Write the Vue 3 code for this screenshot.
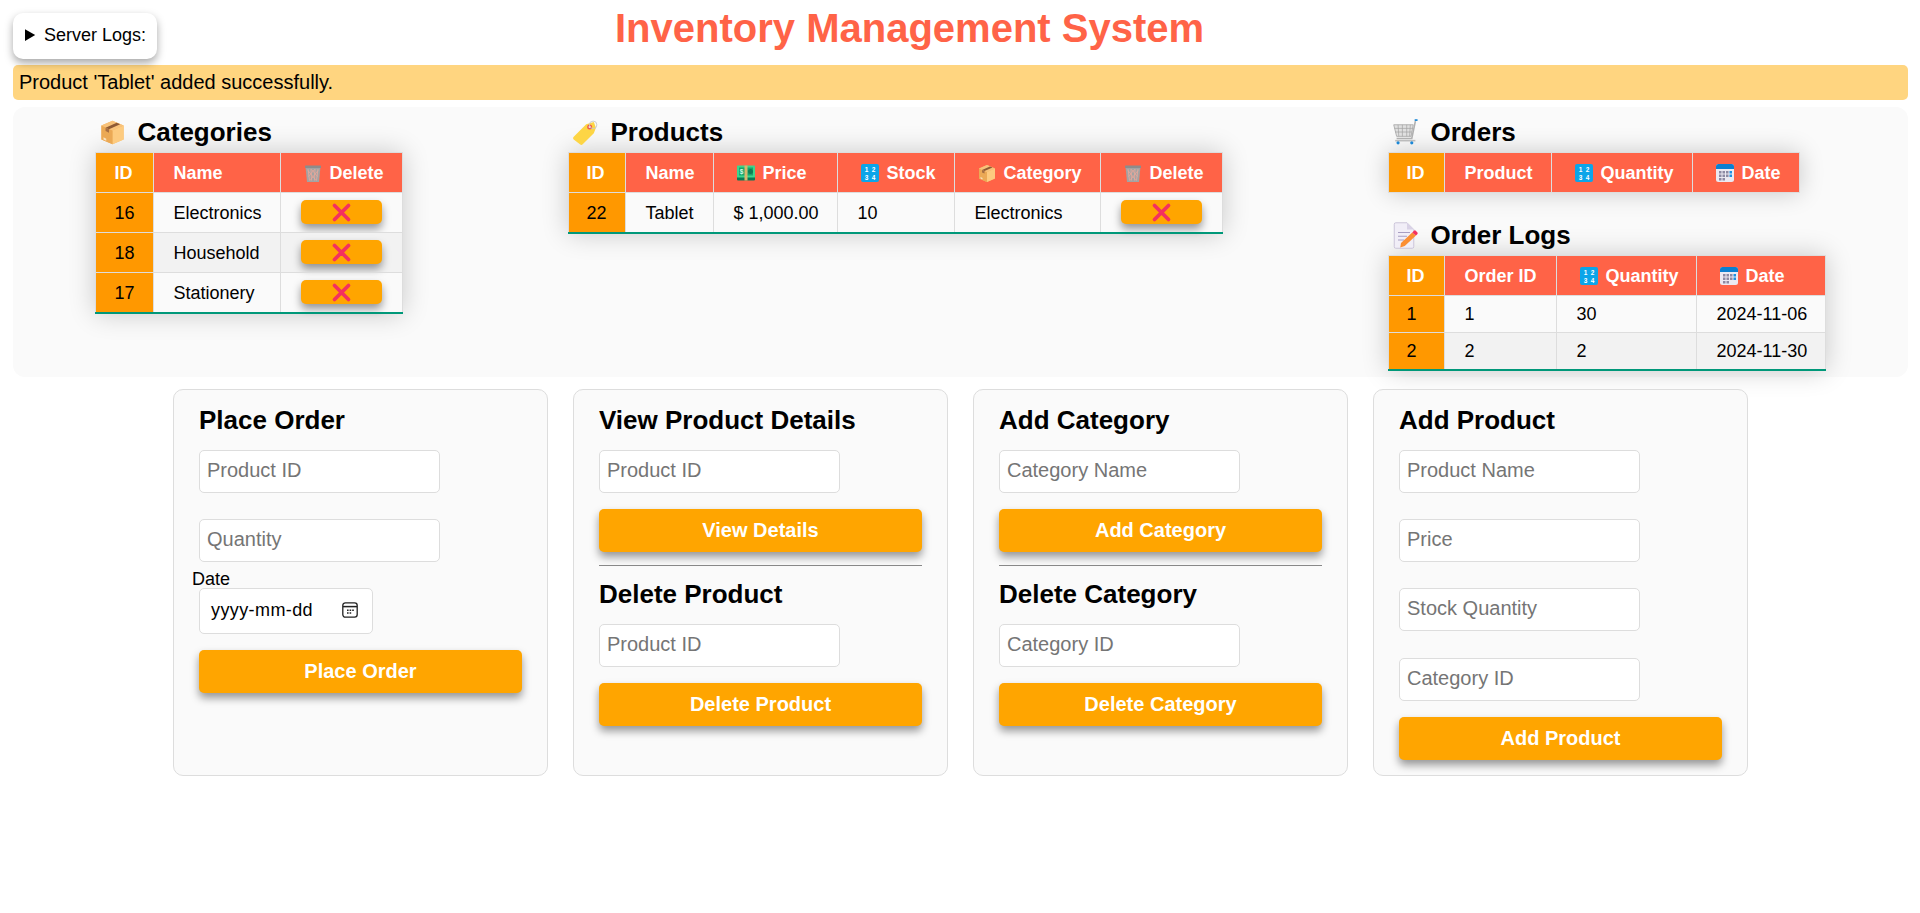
<template>
  <div class="page">
    <div class="top">
      <details class="logs">
        <summary>Server Logs:</summary>
      </details>
      <h1>Inventory Management System</h1>
    </div>
    <div class="message">Product 'Tablet' added successfully.</div>

    <div class="panel">
      <section class="first">
        <h2><span class="h-icon"><svg viewBox="0 0 36 36" width="25" height="27"><use href="#i-box" /></svg></span>Categories</h2>
        <table class="t-cat">
          <thead>
            <tr>
              <th>ID</th>
              <th>Name</th>
              <th><span class="th-icon"><svg viewBox="0 0 36 36" width="18" height="19"><use href="#i-trash" /></svg></span>Delete</th>
            </tr>
          </thead>
          <tbody>
            <tr v-for="c in categories" :key="c.id">
              <td>{{ c.id }}</td>
              <td>{{ c.name }}</td>
              <td class="btn-cell"><button class="del"><svg viewBox="0 0 36 36" width="21" height="21"><use href="#i-x" /></svg></button></td>
            </tr>
          </tbody>
        </table>
      </section>

      <section>
        <h2><span class="h-icon"><svg viewBox="0 0 36 36" width="25" height="25"><use href="#i-tag" /></svg></span>Products</h2>
        <table class="t-prod">
          <thead>
            <tr>
              <th>ID</th>
              <th>Name</th>
              <th><span class="th-icon"><svg viewBox="0 0 36 36" width="18" height="18"><use href="#i-money" /></svg></span>Price</th>
              <th><span class="th-icon"><svg viewBox="0 0 36 36" width="18" height="18"><use href="#i-nums" /></svg></span>Stock</th>
              <th><span class="th-icon"><svg viewBox="0 0 36 36" width="18" height="19"><use href="#i-box" /></svg></span>Category</th>
              <th><span class="th-icon"><svg viewBox="0 0 36 36" width="18" height="19"><use href="#i-trash" /></svg></span>Delete</th>
            </tr>
          </thead>
          <tbody>
            <tr>
              <td>22</td>
              <td>Tablet</td>
              <td>$ 1,000.00</td>
              <td>10</td>
              <td>Electronics</td>
              <td class="btn-cell"><button class="del"><svg viewBox="0 0 36 36" width="21" height="21"><use href="#i-x" /></svg></button></td>
            </tr>
          </tbody>
        </table>
      </section>

      <section>
        <h2><span class="h-icon"><svg viewBox="0 0 36 36" width="26" height="26"><use href="#i-cart" /></svg></span>Orders</h2>
        <table class="t-orders">
          <thead>
            <tr>
              <th>ID</th>
              <th>Product</th>
              <th><span class="th-icon"><svg viewBox="0 0 36 36" width="18" height="18"><use href="#i-nums" /></svg></span>Quantity</th>
              <th><span class="th-icon"><svg viewBox="0 0 36 36" width="18" height="18"><use href="#i-cal" /></svg></span>Date</th>
            </tr>
          </thead>
        </table>

        <h2 class="second"><span class="h-icon"><svg viewBox="0 0 36 36" width="27" height="27"><use href="#i-memo" /></svg></span>Order Logs</h2>
        <table class="t-logs">
          <thead>
            <tr>
              <th>ID</th>
              <th>Order ID</th>
              <th><span class="th-icon"><svg viewBox="0 0 36 36" width="18" height="18"><use href="#i-nums" /></svg></span>Quantity</th>
              <th><span class="th-icon"><svg viewBox="0 0 36 36" width="18" height="18"><use href="#i-cal" /></svg></span>Date</th>
            </tr>
          </thead>
          <tbody>
            <tr v-for="l in orderLogs" :key="l.id">
              <td>{{ l.id }}</td>
              <td>{{ l.orderId }}</td>
              <td>{{ l.qty }}</td>
              <td>{{ l.date }}</td>
            </tr>
          </tbody>
        </table>
      </section>
    </div>

    <div class="forms">
      <div class="card">
        <h3>Place Order</h3>
        <input class="field gap" placeholder="Product ID" />
        <input class="field near" placeholder="Quantity" />
        <label class="date-label">Date</label>
        <div class="date-field">
          <span>yyyy-mm-dd</span>
          <svg viewBox="0 0 16 16" width="16" height="16" fill="none" stroke="#222" stroke-width="1.3">
            <rect x="0.8" y="0.8" width="14.4" height="14.4" rx="2.6" />
            <path d="M1 4.6h14" stroke-width="1.5" />
            <path d="M5 8.2h1.6M7.6 8.2h1.6M10.2 8.2h1.6M5 11h1.6M7.6 11h1.6" stroke-width="1.5" />
          </svg>
        </div>
        <button class="submit">Place Order</button>
      </div>

      <div class="card">
        <h3>View Product Details</h3>
        <input class="field" placeholder="Product ID" />
        <button class="submit">View Details</button>
        <hr />
        <h3>Delete Product</h3>
        <input class="field" placeholder="Product ID" />
        <button class="submit">Delete Product</button>
      </div>

      <div class="card">
        <h3>Add Category</h3>
        <input class="field" placeholder="Category Name" />
        <button class="submit">Add Category</button>
        <hr />
        <h3>Delete Category</h3>
        <input class="field" placeholder="Category ID" />
        <button class="submit">Delete Category</button>
      </div>

      <div class="card">
        <h3>Add Product</h3>
        <input class="field gap" placeholder="Product Name" />
        <input class="field gap" placeholder="Price" />
        <input class="field gap wide-gap" placeholder="Stock Quantity" />
        <input class="field" placeholder="Category ID" />
        <button class="submit">Add Product</button>
      </div>
    </div>

    <!-- emoji drawn once, reused with <use> -->
    <svg class="defs" width="0" height="0" aria-hidden="true">
      <defs>
        <symbol id="i-box" viewBox="0 0 36 36" preserveAspectRatio="none">
          <path d="M18 1 34 8v20L18 35 2 28V8z" fill="#f4b869" />
          <path d="M18 15 34 8v20L18 35z" fill="#fdcb7f" />
          <path d="M2 8 18 15v20L2 28z" fill="#eba955" />
          <path d="M2 8 18 1l16 7-16 7z" fill="#f8c27a" />
          <path d="M8 11 24 4l5 2.2-16 7z" fill="#8f5a34" />
          <path d="M8 11v5l5 2.2v-5z" fill="#a86f42" />
          <path d="M5 25l4 2v3l-4-2z" fill="#f9e3c0" />
        </symbol>
        <symbol id="i-trash" viewBox="0 0 36 36" preserveAspectRatio="none">
          <path d="M3 4h30l-3 31H6z" fill="#a3a3a3" />
          <path d="M8 9 11 32M14 9l1 23M22 9l-1 23M28 9l-3 23M8 12 24 32M15 10 27 24M28 12 12 32M21 10 9 24" stroke="#eda899" stroke-width="1.5" fill="none" />
          <rect x="2" y="2" width="32" height="5" rx="1" fill="#8c8c8c" />
        </symbol>
        <symbol id="i-x" viewBox="0 0 36 36">
          <path d="M6 6 30 30M30 6 6 30" stroke="#f4305f" stroke-width="6.4" stroke-linecap="round" fill="none" />
        </symbol>
        <symbol id="i-money" viewBox="0 0 36 36">
          <rect x="0" y="8" width="36" height="25" rx="2" fill="#0a7a55" />
          <rect x="0" y="3" width="36" height="24" rx="1" fill="#3dd68c" />
          <rect x="4" y="7" width="28" height="16" fill="#17a56d" />
          <rect x="15" y="3" width="6" height="30" fill="#d9b66c" />
          <text x="5.5" y="20" font-size="13" font-family="Liberation Sans" fill="#d5f8e5">$</text>
          <circle cx="27" cy="15" r="5" fill="#0c7f55" />
        </symbol>
        <symbol id="i-nums" viewBox="0 0 36 36">
          <rect x="0" y="0" width="36" height="36" rx="4" fill="#0ba5e9" />
          <text x="11" y="15.5" font-size="13" font-weight="700" font-family="Liberation Sans" text-anchor="middle" fill="#fff">1</text>
          <text x="25" y="15.5" font-size="13" font-weight="700" font-family="Liberation Sans" text-anchor="middle" fill="#fff">2</text>
          <text x="11" y="31" font-size="13" font-weight="700" font-family="Liberation Sans" text-anchor="middle" fill="#fff">3</text>
          <text x="25" y="31" font-size="13" font-weight="700" font-family="Liberation Sans" text-anchor="middle" fill="#fff">4</text>
        </symbol>
        <symbol id="i-cal" viewBox="0 0 36 36">
          <rect x="0" y="0" width="36" height="36" rx="5" fill="#ebe9f2" />
          <path d="M0 10V5a5 5 0 0 1 5-5h26a5 5 0 0 1 5 5v5z" fill="#0b7fd0" />
          <g fill="#8d8aa3">
            <rect x="6" y="14" width="5" height="5" /><rect x="13" y="14" width="5" height="5" /><rect x="20" y="14" width="5" height="5" />
            <rect x="6" y="21" width="5" height="5" /><rect x="13" y="21" width="5" height="5" /><rect x="20" y="21" width="5" height="5" />
            <rect x="6" y="28" width="5" height="5" /><rect x="13" y="28" width="5" height="5" />
          </g>
          <rect x="27" y="14" width="5" height="5" fill="#1c8fe0" /><rect x="27" y="21" width="5" height="5" fill="#1c8fe0" />
        </symbol>
        <symbol id="i-tag" viewBox="0 0 36 36">
          <path d="M1 24 19 6l11-3 3 8-3 8-16 16a3 3 0 0 1-4 0L1 28a3 3 0 0 1 0-4z" fill="#fdd545" />
          <circle cx="24" cy="10" r="3.6" fill="#ef5a4c" />
          <circle cx="24" cy="10" r="1.6" fill="#fbe6e0" />
          <circle cx="29" cy="7" r="5.4" fill="none" stroke="#c9c9c9" stroke-width="1.3" />
        </symbol>
        <symbol id="i-cart" viewBox="0 0 36 36">
          <path d="M1 8h27l-3 16H5z" fill="#e0e0e0" stroke="#a8a8a8" stroke-width="1.2" />
          <path d="M7 8l1 16M13 8v16M19 8v16M24 8l-1 16M2 13h25M3 18h23" stroke="#a3a3a3" stroke-width="1" fill="none" />
          <path d="M31 3 26 27H5" fill="none" stroke="#b0b0b0" stroke-width="2.2" />
          <path d="M30 1.5h4" stroke="#1a87d6" stroke-width="2.4" />
          <path d="M3 30h28" stroke="#bcbcbc" stroke-width="2.2" />
          <circle cx="7" cy="33" r="2.2" fill="#1a87d6" /><circle cx="26" cy="33" r="2.2" fill="#1a87d6" />
        </symbol>
        <symbol id="i-memo" viewBox="0 0 36 36">
          <path d="M3 3a2 2 0 0 1 2-2h15l9 9v23a2 2 0 0 1-2 2H5a2 2 0 0 1-2-2z" fill="#f1eef7" stroke="#c7bfd6" stroke-width="1.2" />
          <path d="M20 1v9h9z" fill="#d9d2e6" />
          <path d="M8 14h16M8 19h12M8 24h8" stroke="#a89ec2" stroke-width="1.4" />
          <path d="M12 28 27 14l5 4-15 14-6 2z" fill="#fb8f33" />
          <path d="M27 14l2-2a2 2 0 0 1 3 0l2 2a2 2 0 0 1 0 2l-2 2z" fill="#f4305f" />
        </symbol>
      </defs>
    </svg>
  </div>
</template>

<script setup>
const categories = [
  { id: 16, name: 'Electronics' },
  { id: 18, name: 'Household' },
  { id: 17, name: 'Stationery' },
]

const orderLogs = [
  { id: 1, orderId: 1, qty: 30, date: '2024-11-06' },
  { id: 2, orderId: 2, qty: 2, date: '2024-11-30' },
]
</script>

<style>
body {
  margin: 0;
  background: #fff;
}
</style>

<style scoped>
.page {
  padding: 13px 13px 0;
  font-family: "Liberation Sans", Arial, sans-serif;
  color: #000;
}

/* 顶部 */
.top {
  display: flex;
  align-items: flex-start;
  height: 46px;
}
.logs {
  width: 144px;
  height: 46px;
  box-sizing: border-box;
  padding: 12px;
  background: #fff;
  border-radius: 10px;
  box-shadow: 0 4px 8px rgba(0, 0, 0, 0.35);
  font-size: 18px;
  white-space: nowrap;
  flex-shrink: 0;
}
h1 {
  margin: -8px 0 0 458px;
  font-size: 40px;
  line-height: 46px;
  font-weight: 700;
  color: #ff6347;
}
.message {
  margin: 6px -1px 0 0;
  height: 35px;
  line-height: 34px;
  padding: 0 6px;
  background: #ffd580;
  border-radius: 5px;
  font-size: 20px;
}

/* 表格区 */
.panel {
  margin: 7px -1px 0 0;
  height: 270px;
  box-sizing: border-box;
  padding-top: 10px;
  display: flex;
  justify-content: space-around;
  align-items: flex-start;
  background: #fafafa;
  border-radius: 12px;
}
.first {
  margin-left: -1px;
}
h2 {
  margin: 0 0 5px;
  height: 30px;
  font-size: 26px;
  line-height: 30px;
  font-weight: 700;
  display: flex;
  align-items: center;
}
h2.second {
  margin-top: 27px;
  margin-bottom: 5px;
}
.h-icon {
  width: 36px;
  margin-right: 7px;
  height: 30px;
  display: flex;
  align-items: center;
  justify-content: center;
  flex-shrink: 0;
}
.h-icon svg { display: block; }

table {
  border-collapse: collapse;
  table-layout: fixed;
  font-size: 18px;
  line-height: 20px;
  box-shadow: 0 0 25px rgba(0, 0, 0, 0.2);
  background: #fafafa;
}
.t-cat { width: 307px; }
.t-prod { width: 654px; }
.t-orders { width: 411px; }
.t-logs { width: 437px; }
th:nth-child(1) { width: 56px; }
.t-cat th:nth-child(1) { width: 58px; }
.t-cat th:nth-child(2) { width: 127px; }
.t-cat th:nth-child(3) { width: 122px; }
.t-prod th:nth-child(1) { width: 57px; }
.t-prod th:nth-child(2) { width: 88px; }
.t-prod th:nth-child(3) { width: 124px; }
.t-prod th:nth-child(4) { width: 117px; }
.t-prod th:nth-child(5) { width: 146px; }
.t-prod th:nth-child(6) { width: 122px; }
.t-orders th:nth-child(2) { width: 107px; }
.t-orders th:nth-child(3) { width: 141px; }
.t-orders th:nth-child(4) { width: 107px; }
.t-logs th:nth-child(2) { width: 112px; }
.t-logs th:nth-child(3) { width: 140px; }
.t-logs th:nth-child(4) { width: 129px; }

th, td {
  padding: 8px 20px;
  border: 1px solid #ddd;
  text-align: left;
  white-space: nowrap;
  box-sizing: border-box;
}
th {
  height: 40px;
  background: #ff6347;
  color: #fff;
  font-weight: 700;
}
th:first-child, td:first-child {
  padding-left: 18px;
  background: #ff9800;
}
.t-cat th:first-child, .t-cat td:first-child {
  padding-left: 19px;
}
tbody tr:nth-child(even) td:not(:first-child) {
  background: #f2f2f2;
}
tbody tr:last-child td {
  border-bottom: 2px solid #009879;
}
.th-icon {
  display: inline-block;
  width: 24px;
  height: 19px;
  margin-right: 5px;
  vertical-align: -4px;
}
.th-icon svg { display: block; margin: 0 auto; }

.btn-cell {
  padding: 7px 20px 8px;
}
.del {
  display: flex;
  align-items: center;
  justify-content: center;
  width: 100%;
  height: 24px;
  padding: 0;
  border: none;
  border-radius: 5px;
  background: #ffa500;
  box-shadow: 0 5px 8px rgba(0, 0, 0, 0.4);
}

/* 表单卡片 */
.forms {
  margin-top: 12px;
  padding-left: 1px;
  display: flex;
  justify-content: center;
  gap: 25px;
}
.card {
  width: 375px;
  height: 387px;
  box-sizing: border-box;
  padding: 15px 25px;
  background: #fafafa;
  border: 1px solid #ddd;
  border-radius: 10px;
}
h3 {
  margin: 0 0 15px;
  font-size: 26px;
  line-height: 30px;
  font-weight: 700;
}
.field {
  display: block;
  width: 241px;
  height: 43px;
  box-sizing: border-box;
  padding: 0 7px 3px;
  border: 1px solid #ddd;
  border-radius: 5px;
  background: #fff;
  font-family: inherit;
  font-size: 20px;
  outline: none;
}
.field.gap { margin-bottom: 26px; }
.field.wide-gap { margin-bottom: 27px; }
.field.near { margin-bottom: 6px; }
.date-label {
  display: block;
  margin-left: -7px;
  height: 20px;
  line-height: 22px;
  font-size: 18px;
}
.date-field {
  width: 174px;
  height: 46px;
  box-sizing: border-box;
  padding: 0 14px 2px 11px;
  display: flex;
  align-items: center;
  justify-content: space-between;
  background: #fff;
  border: 1px solid #ddd;
  border-radius: 5px;
  font-size: 18px;
  letter-spacing: 0.4px;
}
.submit {
  display: block;
  width: 323px;
  height: 43px;
  margin-top: 16px;
  padding: 0;
  border: none;
  border-radius: 5px;
  background: #ffa500;
  color: #fff;
  font-family: inherit;
  font-size: 20px;
  font-weight: 700;
  box-shadow: 0 5px 8px rgba(0, 0, 0, 0.4);
}
hr {
  margin: 13px 0;
  height: 1px;
  border: none;
  background: #888;
}
.defs { position: absolute; }
</style>
